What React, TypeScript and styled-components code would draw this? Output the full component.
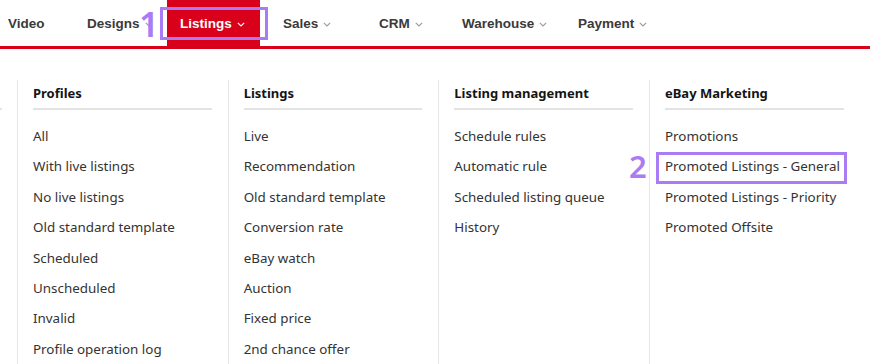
import React from "react";
import styled, { createGlobalStyle } from "styled-components";

const GlobalStyle = createGlobalStyle`
  html, body {
    margin: 0;
    padding: 0;
    background: #fff;
    overflow: hidden;
  }
`;

const navItems = [
  { label: "Video", w: 74, pl: 8, arrow: false },
  { label: "Designs", w: 93, pl: 13, arrow: true },
  { label: "Listings", w: 93, pl: 13, arrow: true, active: true },
  { label: "Sales", w: 106, pl: 23, arrow: true },
  { label: "CRM", w: 83, pl: 13, arrow: true },
  { label: "Warehouse", w: 116, pl: 13, arrow: true },
  { label: "Payment", w: 150, pl: 13, arrow: true },
];

const columns = [
  {
    title: "Profiles",
    items: [
      "All",
      "With live listings",
      "No live listings",
      "Old standard template",
      "Scheduled",
      "Unscheduled",
      "Invalid",
      "Profile operation log",
    ],
  },
  {
    title: "Listings",
    items: [
      "Live",
      "Recommendation",
      "Old standard template",
      "Conversion rate",
      "eBay watch",
      "Auction",
      "Fixed price",
      "2nd chance offer",
    ],
  },
  {
    title: "Listing management",
    items: [
      "Schedule rules",
      "Automatic rule",
      "Scheduled listing queue",
      "History",
    ],
  },
  {
    title: "eBay Marketing",
    items: [
      "Promotions",
      "Promoted Listings - General",
      "Promoted Listings - Priority",
      "Promoted Offsite",
    ],
  },
];

const Chevron: React.FC<{ color: string }> = ({ color }) => (
  <svg width="8" height="5" viewBox="0 0 8 5" fill="none">
    <path d="M0.8 0.8 L4 4 L7.2 0.8" stroke={color} strokeWidth="1.1" />
  </svg>
);

const App: React.FC = () => {
  return (
    <Page>
      <GlobalStyle />
      <NavBar>
        {navItems.map((item) => (
          <NavItem
            key={item.label}
            $w={item.w}
            $pl={item.pl}
            $active={!!item.active}
          >
            {item.label}
            {item.arrow && (
              <Chevron color={item.active ? "#ffffff" : "#9a9a9a"} />
            )}
            {item.active && <MarkBox />}
            {item.active && (
              <StepNumber $left={-28} $top={6} $size={35}>
                1
              </StepNumber>
            )}
          </NavItem>
        ))}
      </NavBar>
      <Dropdown>
        <Column $stub>
          <Header />
        </Column>
        {columns.map((col) => (
          <Column key={col.title}>
            <Header>{col.title}</Header>
            <ItemList>
              {col.items.map((it) => (
                <Item key={it}>
                  {it}
                  {it === "Promoted Listings - General" && (
                    <>
                      <ItemMark />
                      <StepNumber $left={-36} $top={-3} $size={31}>
                        2
                      </StepNumber>
                    </>
                  )}
                </Item>
              ))}
            </ItemList>
          </Column>
        ))}
      </Dropdown>
    </Page>
  );
};

const Page = styled.div`
  width: 870px;
  height: 364px;
  overflow: hidden;
  background: #fff;
  font-family: "Noto Sans", "Open Sans", sans-serif;
`;

const NavBar = styled.div`
  display: flex;
  height: 46px;
  border-bottom: 3px solid #d8001a;
`;

const NavItem = styled.div<{ $w: number; $pl: number; $active: boolean }>`
  position: relative;
  flex: 0 0 ${(p) => p.$w}px;
  box-sizing: border-box;
  padding-left: ${(p) => p.$pl}px;
  padding-top: 1px;
  display: flex;
  align-items: center;
  gap: 5px;
  font-family: "Liberation Sans", Arial, sans-serif;
  font-weight: bold;
  font-size: 13.5px;
  color: ${(p) => (p.$active ? "#ffffff" : "#3a3a3a")};
  background: ${(p) => (p.$active ? "#d8001a" : "transparent")};
  svg {
    margin-top: 1px;
  }
`;

const MarkBox = styled.div`
  position: absolute;
  left: -7px;
  right: -8px;
  top: 7px;
  bottom: 6px;
  border: 3px solid #a97cf5;
`;

const StepNumber = styled.span<{ $left: number; $top: number; $size: number }>`
  position: absolute;
  left: ${(p) => p.$left}px;
  top: ${(p) => p.$top}px;
  font-family: "Noto Sans", sans-serif;
  font-weight: 600;
  font-size: ${(p) => p.$size}px;
  line-height: 36px;
  color: #a97cf5;
`;

const Dropdown = styled.div`
  display: flex;
  padding-top: 31px;
  height: 284px;
`;

const Column = styled.div<{ $stub?: boolean }>`
  flex: 0 0 ${(p) => (p.$stub ? "17px" : "210.67px")};
  box-sizing: border-box;
  padding: ${(p) => (p.$stub ? "0 15px 0 0" : "0 16px 0 15px")};
  border-left: ${(p) => (p.$stub ? "none" : "1px solid #e6e6e6")};
`;

const Header = styled.div`
  height: 28px;
  line-height: 26px;
  border-bottom: 2px solid #e3e3e3;
  font-family: "Noto Sans", sans-serif;
  font-weight: bold;
  font-size: 13px;
  color: #141414;
`;

const ItemList = styled.div`
  display: flex;
  flex-direction: column;
  padding-top: 11px;
`;

const Item = styled.div`
  position: relative;
  height: 30.4px;
  line-height: 30.4px;
  font-size: 13.4px;
  color: #333;
  white-space: nowrap;
`;

const ItemMark = styled.div`
  position: absolute;
  left: -9px;
  right: -3px;
  top: 1px;
  bottom: -2px;
  border: 3px solid #a97cf5;
`;

export default App;
